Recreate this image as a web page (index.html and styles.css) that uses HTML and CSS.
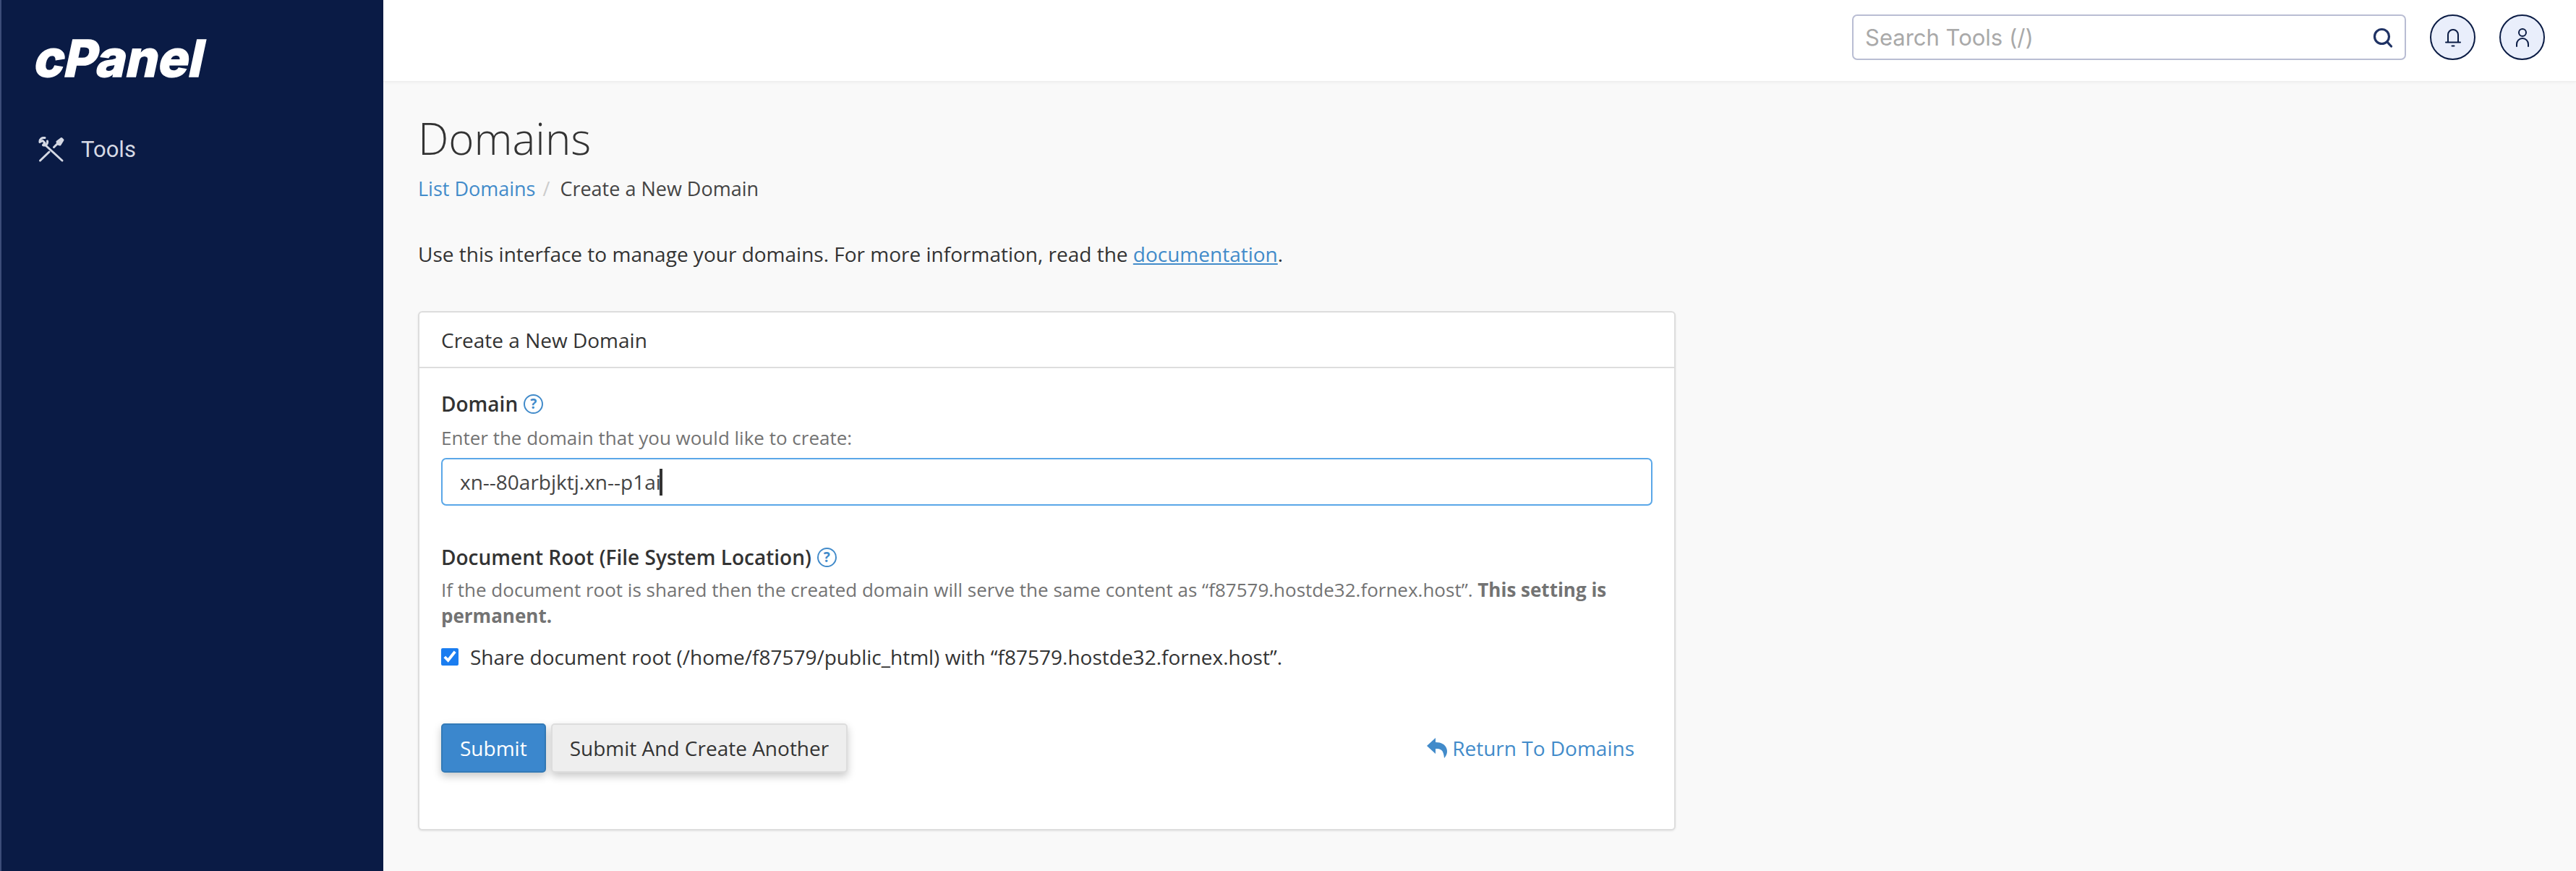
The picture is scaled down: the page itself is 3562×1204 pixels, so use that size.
FILE: index.html
```html
<!DOCTYPE html>
<html lang="en">
<head>
<meta charset="utf-8">
<title>Domains - cPanel</title>
<link rel="stylesheet" href="styles.css">
</head>
<body>
<div class="app">
  <aside class="sidebar">
    <div class="logo">cPanel</div>
    <a class="nav-item">
      <svg class="nav-icon" viewBox="0 0 36 36" fill="none" stroke="#d5d9e4" stroke-width="3" stroke-linecap="round" stroke-linejoin="round">
        <path d="M33 33 8.5 10.5"/>
        <path d="M2.5 33 15 21"/>
        <path d="M21.5 14.5 27.5 8.5"/>
        <path d="M26 7 32 2.5 34 4.5 30 11 27 10Z" fill="#d5d9e4"/>
        <path d="M9 1.5C5 .8 1.5 3.5 2 7.5L6 5.5 9 8.5 6.5 11.5C10 13 13.5 10 12.5 6"/>
      </svg>
      <span>Tools</span>
    </a>
  </aside>
  <div class="main">
    <header class="topbar">
      <div class="search">
        <span class="search-text">Search Tools (/)</span>
        <svg class="search-icon" viewBox="0 0 28 28" fill="none" stroke="#1f3264" stroke-width="3.2" stroke-linecap="round">
          <circle cx="12.5" cy="12.5" r="10"/>
          <path d="M20 20l5.5 6"/>
        </svg>
      </div>
      <button class="round-btn" type="button" aria-label="Notifications">
        <svg viewBox="0 0 24 28" fill="none" stroke="#0b1c45" stroke-width="2" stroke-linecap="round">
          <path d="M5 20V10a7 7 0 0 1 14 0v10"/>
          <path d="M2 20.5h20"/>
          <path d="M10.5 25.5h3"/>
        </svg>
      </button>
      <button class="round-btn" type="button" aria-label="Account">
        <svg viewBox="0 0 24 28" fill="none" stroke="#0b1c45" stroke-width="2" stroke-linecap="round">
          <circle cx="12" cy="7" r="5"/>
          <path d="M4 26v-3a8 8 0 0 1 16 0v3"/>
        </svg>
      </button>
    </header>
    <main class="content">
      <h1 class="title">Domains</h1>
      <nav class="crumbs"><a class="link">List Domains</a><span class="sep">/</span><span>Create a New Domain</span></nav>
      <p class="intro">Use this interface to manage your domains. For more information, read the <a class="doc-link">documentation</a>.</p>
      <section class="card">
        <div class="card-head">Create a New Domain</div>
        <form class="card-body">
          <div class="label">Domain <span class="help">?</span></div>
          <div class="hint">Enter the domain that you would like to create:</div>
          <div class="field"><span>xn--80arbjktj.xn--p1ai</span><span class="caret"></span></div>
          <div class="label label-doc">Document Root (File System Location) <span class="help">?</span></div>
          <div class="hint hint-doc">If the document root is shared then the created domain will serve the same content as “f87579.hostde32.fornex.host”. <b>This setting is permanent.</b></div>
          <label class="check"><input type="checkbox" checked> <span>Share document root (/home/f87579/public_html) with “f87579.hostde32.fornex.host”.</span></label>
          <div class="actions">
            <div class="buttons">
              <button class="btn btn-primary" type="button">Submit</button>
              <button class="btn" type="button">Submit And Create Another</button>
            </div>
            <a class="link back">
              <svg class="back-icon" viewBox="0 0 30 30" fill="#428bca"><path d="M13 1 1 12l12 11v-7c7 0 11 1 12 13 4-5 5-9 3-14-2-5-7-8-15-8Z"/></svg>
              Return To Domains
            </a>
          </div>
        </form>
      </section>
    </main>
  </div>
</div>
</body>
</html>
```

FILE: styles.css
```css
* { box-sizing: border-box; }
html, body { margin: 0; height: 100%; }
body {
  font-family: "Open Sans", sans-serif;
  font-size: 28px;
  color: #333;
  background: #f9f9f9;
  overflow: hidden;
}
.app { display: flex; height: 1204px; }
.sidebar {
  width: 530px;
  flex: none;
  background: #0a1b45;
  border-left: 2px solid #3c4c78;
  padding: 45px 0 0 46px;
  color: #fff;
}
.logo {
  font-family: Inter, sans-serif;
  font-weight: 800;
  font-size: 70px;
  line-height: 72px;
  margin-left: -6px;
  color: #fff;
  -webkit-text-stroke: 1.5px #fff;
  transform: skewX(-12deg);
  transform-origin: left bottom;
}
.nav-item {
  display: flex;
  align-items: center;
  gap: 23px;
  margin: 72px 0 0 5px;
  color: #d5d9e4;
  font-family: Roboto, sans-serif;
  font-size: 31px;
  line-height: 36px;
}
.nav-icon { width: 36px; height: 36px; flex: none; }
.main { flex: 1; min-width: 0; display: flex; flex-direction: column; }
.topbar {
  height: 113px;
  flex: none;
  background: #fff;
  border-bottom: 1px solid #efefef;
  box-shadow: 0 1px 4px rgba(0,0,0,.05);
  display: flex;
  justify-content: flex-end;
  align-items: flex-start;
  gap: 33px;
  padding: 20px 43px 0 0;
}
.search {
  width: 766px;
  height: 63px;
  border: 2px solid #b9bdd3;
  border-radius: 7px;
  display: flex;
  align-items: center;
  justify-content: space-between;
  padding: 0 16px;
  background: #fff;
}
.search-text { font-family: Inter, sans-serif; font-size: 31px; color: #a9a9a9; }
.search-icon { width: 28px; height: 28px; }
.round-btn {
  width: 63px;
  height: 63px;
  flex: none;
  border: 2px solid #0b1c45;
  border-radius: 50%;
  background: #e9eefb;
  padding: 0;
  display: flex;
  align-items: center;
  justify-content: center;
}
.round-btn svg { width: 24px; height: 28px; }
.content { padding: 45px 0 0 48px; width: 1789px; }
.title {
  margin: 0;
  font-weight: 300;
  font-size: 60px;
  line-height: 66px;
  color: #333;
}
.crumbs { margin-top: 17px; font-size: 27px; line-height: 40px; color: #444; }
.link { color: #428bca; }
.sep { color: #ccc; margin: 0 14px 0 10px; }
.intro { margin: 50px 0 0; line-height: 40px; }
.doc-link { color: #428bca; text-decoration: underline; }
.card {
  margin-top: 59px;
  width: 1739px;
  height: 718px;
  background: #fff;
  border: 2px solid #ddd;
  border-radius: 6px;
  box-shadow: 0 1px 3px rgba(0,0,0,.08);
}
.card-head {
  height: 77px;
  border-bottom: 2px solid #ddd;
  padding: 0 30px;
  display: flex;
  align-items: center;
}
.card-body { padding: 29px 30px 0; display: flex; flex-direction: column; }
.label { font-weight: 600; line-height: 40px; color: #333; display: flex; align-items: center; gap: 8px; }
.help {
  display: inline-flex;
  align-items: center;
  justify-content: center;
  width: 27px;
  height: 27px;
  border: 2.5px solid #428bca;
  border-radius: 50%;
  color: #428bca;
  font-size: 19px;
  font-weight: 700;
  line-height: 1;
}
.hint { font-size: 26px; line-height: 36px; color: #737373; margin-top: 9px; }
.field {
  height: 66px;
  margin-top: 10px;
  border: 2px solid #5aa7e8;
  border-radius: 7px;
  padding: 0 24px;
  display: flex;
  align-items: center;
  font-size: 28px;
  color: #444;
}
.caret { width: 4px; height: 37px; background: #333; margin-left: -2px; }
.label-doc { margin-top: 51px; }
.hint-doc { margin-top: 7px; }
.check { display: flex; align-items: center; gap: 16px; margin-top: 19px; line-height: 40px; }
.check input { width: 24px; height: 24px; margin: 0; accent-color: #1a7df0; flex: none; }
.actions { display: flex; justify-content: space-between; align-items: center; margin-top: 72px; padding-right: 25px; }
.buttons { display: flex; gap: 7px; }
.btn {
  height: 68px;
  padding: 0 24px;
  font: inherit;
  color: #333;
  background: #eee;
  border: 2px solid #ddd;
  border-radius: 5px;
  box-shadow: 0 5px 12px rgba(0,0,0,.22);
}
.btn-primary { background: #3b87cd; border-color: #337ab7; color: #fff; }
.back { display: flex; align-items: center; gap: 6px; }
.back-icon { width: 30px; height: 30px; }
```
